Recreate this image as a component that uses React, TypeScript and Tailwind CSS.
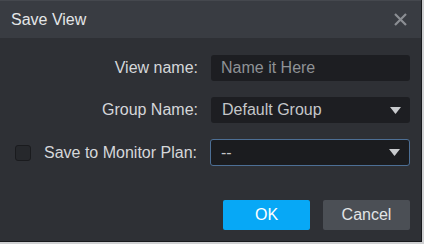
import React, { useState } from 'react';

const Caret: React.FC = () => (
    <svg width="11" height="7" viewBox="0 0 11 7" className="shrink-0">
        <path d="M0 0 H11 L5.5 7 Z" fill="#c9cbce" />
    </svg>
);

const SaveViewDialog: React.FC = () => {
    const [name, setName] = useState('');
    const [savePlan, setSavePlan] = useState(false);

    return (
        <div className="w-[424px] h-[244px] bg-[#cfd0d2]" style={{ fontFamily: '"Liberation Sans", Arial, sans-serif' }}>
            <div className="w-[422px] h-[242px] bg-[#2e3035] border-r border-b border-[#17181b] flex flex-col">
                <header className="h-[38px] bg-[#393c42] border-t border-[#45484e] flex items-center justify-between pl-[11px] pr-[14px]">
                    <h1 className="text-[16px] text-[#e4e6e8] leading-none">Save View</h1>
                    <button className="text-[#8b8e93]">
                        <svg width="13" height="13" viewBox="0 0 13 13">
                            <path d="M1 1 L12 12 M12 1 L1 12" stroke="currentColor" strokeWidth="2.2" />
                        </svg>
                    </button>
                </header>

                <main className="flex-1 flex flex-col pt-[17px] pr-[11px] text-[16px]">
                    <div className="flex items-center h-[26px]">
                        <label className="w-[198px] text-right text-[#d5d7da] whitespace-nowrap">View name:</label>
                        <input
                            value={name}
                            onChange={(e) => setName(e.target.value)}
                            placeholder="Name it Here"
                            className="ml-[13px] w-[199px] h-[26px] bg-[#1d1e22] rounded-[3px] px-[10px] text-[#cfd1d4] placeholder:text-[#8f9296] outline-none"
                        />
                    </div>

                    <div className="flex items-center h-[26px] mt-[16px]">
                        <label className="w-[198px] text-right text-[#d5d7da] whitespace-nowrap">Group Name:</label>
                        <div className="ml-[13px] w-[199px] h-[26px] bg-[#1d1e22] rounded-[3px] pl-[11px] pr-[9px] flex items-center justify-between">
                            <span className="text-[#c4c6c9]">Default Group</span>
                            <Caret />
                        </div>
                    </div>

                    <div className="flex items-center h-[27px] mt-[16px]">
                        <div className="w-[198px] flex items-center pl-[15px]">
                            <button
                                onClick={() => setSavePlan(!savePlan)}
                                className="w-[16px] h-[16px] rounded-[3px] bg-[#26282c] border border-[#1a1b1e] shrink-0"
                            />
                            <span className="ml-[13px] text-[#d5d7da] whitespace-nowrap">Save to Monitor Plan:</span>
                        </div>
                        <div className="ml-[12px] w-[200px] h-[27px] bg-[#1b1c1f] border border-[#4d6f95] rounded-[3px] pl-[10px] pr-[9px] flex items-center justify-between">
                            <span className="text-[#c4c6c9]">--</span>
                            <Caret />
                        </div>
                    </div>

                    <div className="flex justify-end gap-[13px] mt-auto mb-[11px]">
                        <button className="w-[87px] h-[30px] bg-[#07a8f6] rounded-[2px] text-white">OK</button>
                        <button className="w-[87px] h-[30px] bg-[#4b4f55] rounded-[2px] text-[#e2e4e6]">Cancel</button>
                    </div>
                </main>
            </div>
        </div>
    );
};

export default SaveViewDialog;
